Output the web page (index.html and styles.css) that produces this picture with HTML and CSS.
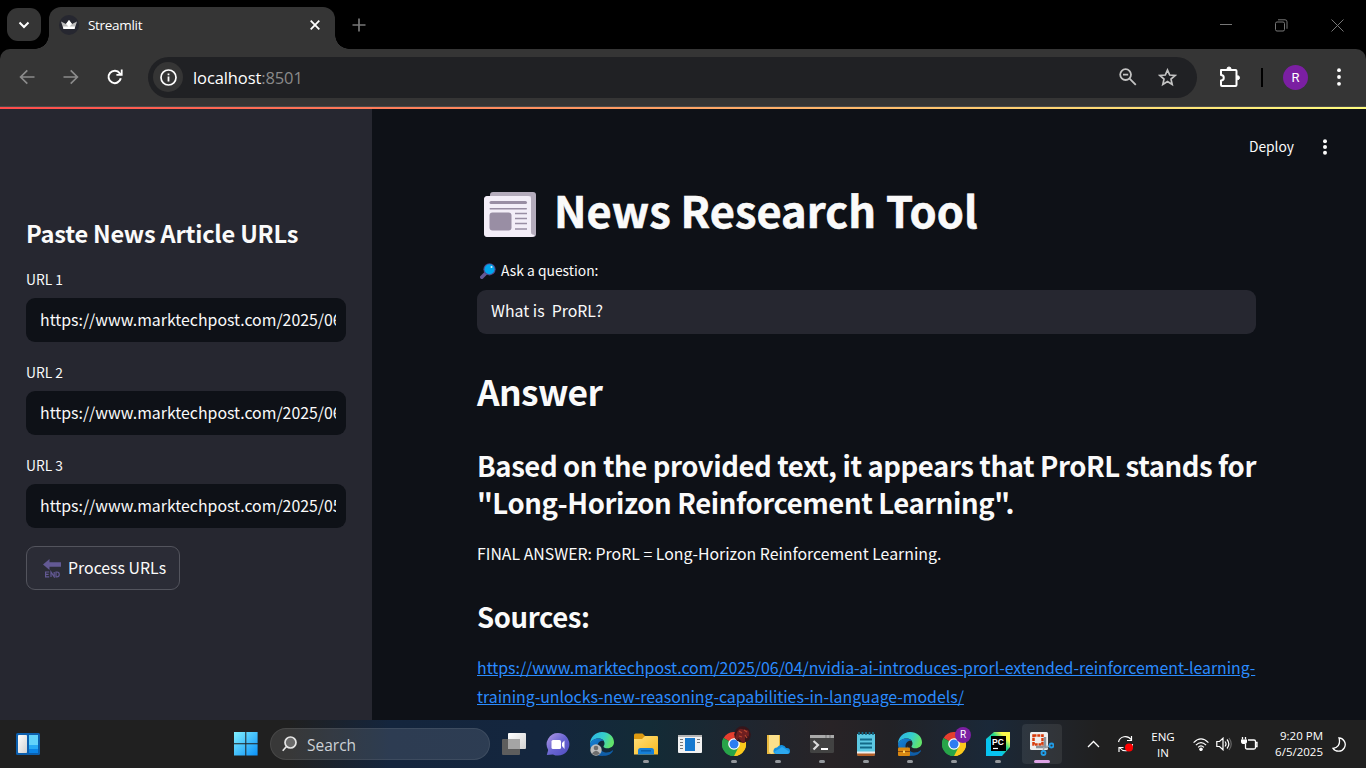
FILE: index.html
```html
<!DOCTYPE html>
<html lang="en">
<head>
<meta charset="utf-8">
<title>Streamlit</title>
<link rel="stylesheet" href="styles.css">
</head>
<body>
<svg class="defs" width="0" height="0" aria-hidden="true">
  <defs>
    <linearGradient id="win" x1="0" y1="0" x2="1" y2="1"><stop offset="0" stop-color="#80f0ff"/><stop offset="1" stop-color="#0a90f8"/></linearGradient>
    <linearGradient id="edgeTop" x1="0" y1="0" x2="1" y2=".3"><stop offset="0" stop-color="#2bb0ea"/><stop offset=".6" stop-color="#36cfcb"/><stop offset="1" stop-color="#62e36b"/></linearGradient>
    <linearGradient id="edgeBot" x1="0" y1="0" x2="1" y2="1"><stop offset="0" stop-color="#1683d6"/><stop offset="1" stop-color="#0b4a93"/></linearGradient>
    <linearGradient id="chat" x1="0" y1="0" x2="1" y2="1"><stop offset="0" stop-color="#b49be6"/><stop offset=".5" stop-color="#6a66d2"/><stop offset="1" stop-color="#4f4bc0"/></linearGradient>
    <linearGradient id="fold" x1="0" y1="0" x2="1" y2="1"><stop offset="0" stop-color="#ffe07a"/><stop offset="1" stop-color="#f9b91e"/></linearGradient>
    <linearGradient id="pc" x1="0" y1="1" x2="1" y2="0"><stop offset=".35" stop-color="#07c3f2"/><stop offset=".6" stop-color="#21d789"/><stop offset=".8" stop-color="#fcf84a"/></linearGradient>
    <linearGradient id="light" x1="0" y1="0" x2="1" y2="1"><stop offset="0" stop-color="#fff"/><stop offset="1" stop-color="#d2d2d2"/></linearGradient>
    <symbol id="edge" viewBox="0 0 24 24">
      <path d="M0 12C0 5 5.500 0 12 0c7 0 12 4.800 12 10.200 0 3.800-3 6-6.500 6-2.500 0-4-.9-4-1.800 0-.6 1-1.200 1-3C14.500 8.500 12 6.500 8.500 6.500 4 6.500 1 9 0 12z" fill="url(#edgeTop)"/>
      <path d="M0 12c1-3.500 4.500-5.500 8.500-5.500 2.500 0 4.500 1 5.300 2.500-4-.8-6.300 2-6.300 5.500 0 4.500 4 8 8.500 8 2 0 4-.7 5.500-1.800C19.500 23 16 24 12 24 5 24 0 18.500 0 12z" fill="url(#edgeBot)"/>
      <path d="M9.500 14c0 4 3.500 6.500 7 6.500 2.500 0 4.500-1 5.700-2 .6-.5 1 .2.500.9C21 22 18 23.500 15 23.500 10 23 7 18 9.500 14z" fill="#0f5ea8"/>
    </symbol>
    <symbol id="chrome" viewBox="0 0 24 24">
      <path d="M12 12 1.600 6A12 12 0 0 1 22.400 6z" fill="#e43e2e"/>
      <path d="M12 12 22.400 6A12 12 0 0 1 12 24z" fill="#fbc91c"/>
      <path d="M12 12V24A12 12 0 0 1 1.600 6z" fill="#27a449"/>
      <path d="M12 6.500H22.700A12 12 0 0 1 12 24l4.800-9.200z" fill="#fbc91c"/>
      <path d="M12 24 16.800 14.800 7.200 14.800 1.600 6A12 12 0 0 0 12 24z" fill="#27a449"/>
      <circle cx="12" cy="12" r="5.800" fill="#fff"/><circle cx="12" cy="12" r="4.500" fill="#2d7df0"/>
    </symbol>
  </defs>
</svg>

<header class="tabstrip">
  <button class="tab-search"><svg width="12" height="12" viewBox="0 0 12 12"><path d="M1.500 3.500 6 8l4.500-4.500" fill="none" stroke="#fff" stroke-width="2"/></svg></button>
  <div class="tab">
    <span class="favicon"><svg width="16" height="10" viewBox="0 0 16 10"><path d="M0 1.500 5 4 8 0l3 4 5-2.500L13.500 9h-11z" fill="#bdbdbd"/><path d="M5 4 8 0l3 4-3 3zM2 6.500h12L13.500 9h-11z" fill="#fff"/></svg></span>
    <span class="tab-title">Streamlit</span>
    <svg class="tab-close" width="10" height="10" viewBox="0 0 10 10"><path d="M.7.7l8.600 8.600M9.300.7.700 9.300" stroke="#fff" stroke-width="1.800"/></svg>
  </div>
  <svg class="new-tab" width="14" height="14" viewBox="0 0 14 14"><path d="M7 .5v13M.5 7h13" stroke="#777" stroke-width="1.700"/></svg>
  <div class="window-controls">
    <svg width="12" height="12" viewBox="0 0 12 12"><path d="M0 5.500h12" stroke="#777"/></svg>
    <svg width="13" height="13" viewBox="0 0 13 13" fill="none" stroke="#777"><rect x=".5" y="3" width="9" height="9" rx="1.500"/><path d="M3 .8h7a2 2 0 0 1 2 2v7"/></svg>
    <svg width="13" height="13" viewBox="0 0 13 13"><path d="m.5.5 12 12m0-12-12 12" stroke="#777"/></svg>
  </div>
</header>

<nav class="toolbar">
  <svg class="nav-icon" width="16" height="16" viewBox="0 0 16 16" fill="none" stroke="#8b8b8b" stroke-width="1.700"><path d="M15.500 8H2M8.300 1.300 1.600 8l6.700 6.700"/></svg>
  <svg class="nav-icon" width="16" height="16" viewBox="0 0 16 16" fill="none" stroke="#8b8b8b" stroke-width="1.700"><path d="M.5 8H14M7.700 1.300 14.400 8l-6.700 6.700"/></svg>
  <svg class="nav-icon" width="16" height="16" viewBox="0 0 16 16"><path d="M13.800 9.300A6.200 6.200 0 1 1 12.800 4.300L14 5.700" fill="none" stroke="#fff" stroke-width="2"/><path d="M15.600.5v6.200H9.400V5h4.400V.5z" fill="#fff"/></svg>
  <div class="omnibox">
    <span class="site-info"><svg width="17" height="17" viewBox="0 0 17 17"><circle cx="8.500" cy="8.500" r="7.500" fill="none" stroke="#fff" stroke-width="1.700"/><path d="M8.500 7.500v5M8.500 4.500v1.800" stroke="#fff" stroke-width="1.800"/></svg></span>
    <span class="url">localhost<span class="port">:8501</span></span>
    <svg class="zoom-icon" width="18" height="18" viewBox="0 0 18 18" fill="none" stroke="#c3c3c3" stroke-width="1.800"><circle cx="6.600" cy="6.600" r="5.400"/><path d="M4 6.600h5.200M10.600 10.600l6.200 6.200"/></svg>
    <svg class="star" width="19" height="19" viewBox="0 0 19 19" fill="none" stroke="#c3c3c3" stroke-width="1.700"><path d="m9.500 2 2.200 5 5.400.5-4.100 3.600 1.200 5.400-4.700-2.900-4.700 2.900L6 11.100 1.900 7.500 7.300 7z"/></svg>
  </div>
  <svg class="puzzle" width="22" height="22" viewBox="0 0 22 22" fill="none" stroke="#fff" stroke-width="2" stroke-linejoin="round"><path d="M2 4h14.500a1 1 0 0 1 1 1v14a1 1 0 0 1-1 1H3a1 1 0 0 1-1-1v-4.500c3.700 0 3.700-5.500 0-5.500z"/><path d="M8 3a2 2 0 0 1 4 0zM18.500 9.700a2 2 0 0 1 0 4z" fill="#fff" stroke-width="1"/></svg>
  <span class="separator"></span>
  <span class="profile">R</span>
  <svg width="6" height="18" viewBox="0 0 6 18" fill="#fff"><circle cx="3" cy="2.200" r="1.900"/><circle cx="3" cy="9" r="1.900"/><circle cx="3" cy="15.800" r="1.900"/></svg>
</nav>
<div class="decoration"></div>

<div class="app">
  <aside class="sidebar">
    <h2 class="side-title">Paste News Article URLs</h2>
    <label class="field-label">URL 1</label>
    <div class="side-input"><span>https://www.marktechpost.com/2025/06/04</span></div>
    <label class="field-label">URL 2</label>
    <div class="side-input"><span>https://www.marktechpost.com/2025/06/04</span></div>
    <label class="field-label">URL 3</label>
    <div class="side-input"><span>https://www.marktechpost.com/2025/05/30</span></div>
    <button class="process"><svg width="18" height="19" viewBox="0 0 18 19"><path d="M0 5.500 6.500 0v3.200H18v4.600H6.500V11z" fill="#635994"/><path d="M6.200 13H2.600v4.800h3.600M2.600 15.400h3M8 18v-5l3.200 4.800V13M13 13v4.800h1c3 0 3-4.800 0-4.800z" fill="none" stroke="#635994" stroke-width="1.200"/></svg><span>Process URLs</span></button>
  </aside>

  <main class="main">
    <div class="app-bar"><span>Deploy</span><svg width="6" height="16" viewBox="0 0 6 16" fill="#fafafa"><circle cx="3" cy="2.200" r="2"/><circle cx="3" cy="8" r="2"/><circle cx="3" cy="13.800" r="2"/></svg></div>
    <h1 class="title">
      <svg width="52" height="46" viewBox="0 0 52 46"><path d="M6 3q0-3 3-3h40q3 0 3 3v39q0 3-3 3H9z" fill="#b4acbc"/><rect x="0" y="4" width="50" height="41" rx="3.500" fill="#cdc4d6"/><path d="M0 8q0-4 4-4h40q3 0 3 3v33q0 3 4 3-1 2-4 2H4q-4 0-4-4z" fill="#f3eef8"/><path d="M47 3h4.500v37q0 2.500-2.200 2.500T47 40z" fill="#b4acbc"/><rect x="5.500" y="9" width="37.500" height="3" rx="1.500" fill="#998ea4"/><rect x="5.500" y="16" width="37.500" height="1.500" rx=".7" fill="#998ea4"/><rect x="5.500" y="20.500" width="22" height="18" rx="3" fill="#998ea4"/><path d="M31 21.500h12M31 26.500h12M31 31.500h12M31 37h12" stroke="#998ea4" stroke-width="1.300"/></svg>
      <span>News Research Tool</span>
    </h1>
    <label class="question-label"><svg width="16" height="16" viewBox="0 0 16 16"><path d="M6 10 1.800 14.200" stroke="#635994" stroke-width="3.600" stroke-linecap="round"/><circle cx="9.500" cy="6.300" r="6.100" fill="#4b4b8f"/><circle cx="9.500" cy="6.300" r="5" fill="#00a6ed"/><circle cx="11.500" cy="4" r="1" fill="#d8f2ff"/></svg><span>Ask a question:</span></label>
    <div class="question-input">What is&nbsp; ProRL?</div>
    <h1 class="answer">Answer</h1>
    <h3 class="statement">Based on the provided text, it appears that ProRL stands for<br>"Long-Horizon Reinforcement Learning".</h3>
    <p class="body">FINAL ANSWER: ProRL = Long-Horizon Reinforcement Learning.</p>
    <h3 class="statement sources">Sources:</h3>
    <p class="body"><a>https://www.marktechpost.com/2025/06/04/nvidia-ai-introduces-prorl-extended-reinforcement-learning-<br>training-unlocks-new-reasoning-capabilities-in-language-models/</a></p>
  </main>
</div>

<footer class="taskbar">
  <svg class="widgets" width="24" height="22" viewBox="0 0 24 22"><rect width="24" height="22" rx="1.500" fill="#0c5fae"/><rect x="2" y="2" width="9" height="18" rx=".8" fill="url(#light)"/><path d="M13 2h9v10h-9z" fill="#62d2fb"/><path d="M13 12h9v4h-9z" fill="#27a9f5"/><path d="M13 16h9v4h-9z" fill="#0a84e8"/></svg>
  <svg class="start" width="24" height="24" viewBox="0 0 24 24"><path d="M0 0h11.300v11.300H0zM12.300 0h11.300v11.300H12.300zM0 12.300h11.300v11.300H0zM12.300 12.300h11.300v11.300H12.300z" fill="url(#win)"/></svg>
  <div class="search"><svg width="15" height="16" viewBox="0 0 15 16" fill="#6b6b6b" stroke="#e6e6e6" stroke-width="1.700"><circle cx="8.500" cy="6.500" r="5.500"/><path d="M4.500 10.500.7 14.800"/></svg><span>Search</span></div>
  <div class="apps">
    <div class="app-icon"><svg width="24" height="24" viewBox="0 0 24 24"><rect x="6" y="1" width="18" height="16" rx="1" fill="url(#light)"/><rect x="0" y="7" width="18" height="16" rx="1" fill="#5d5d5d"/><path d="M6 7h12v10H6z" fill="#a5a5a5"/></svg></div>
    <div class="app-icon"><svg width="24" height="24" viewBox="0 0 24 24"><path d="M12 1a11.300 11.300 0 1 1-5 21.400L.8 23l1.400-5A11.300 11.300 0 0 1 12 1z" fill="url(#chat)"/><rect x="5.500" y="8" width="9.500" height="9" rx="1.500" fill="#fff"/><path d="m16 11 2.500-2.500V17L16 14z" fill="#fff"/></svg></div>
    <div class="app-icon"><svg width="24" height="24"><use href="#edge"/><circle cx="6" cy="18" r="5.700" fill="#bdbdbd"/><circle cx="6" cy="16" r="2.300" fill="#6d6d6d"/><path d="M2 21.500q4-5.500 8 0-4 3-8 0z" fill="#6d6d6d"/></svg></div>
    <div class="app-icon running"><svg width="24" height="24" viewBox="0 0 24 24"><path d="M0 3q0-1.500 1.500-1.500h7L11 4v4H0z" fill="#dd9a10"/><path d="M0 7h8l3-3h12q1 0 1 1v17.500H0z" fill="url(#fold)"/><path d="M4 22.500v-4q0-2.500 2.500-2.500h11q2.500 0 2.500 2.500v4z" fill="#1580d8"/><path d="M7 18.800h10" stroke="#0b5da8" stroke-width="1.500"/></svg></div>
    <div class="app-icon"><svg width="24" height="24" viewBox="0 0 24 24"><rect y="3" width="24" height="18" rx="1" fill="#f2f2f2"/><path d="M0 3h24v2H0z" fill="#b5b5b5"/><path d="M7 6h10v13H7z" fill="#1679cf"/><path d="M2 7.500h3M2 10.500h3M2 13.500h3M2 16.500h3M19 7.500h3M19 10.500h3" stroke="#777" stroke-width="1"/></svg></div>
    <div class="app-icon running"><svg width="24" height="24"><use href="#chrome"/></svg><svg class="badge photo" width="17" height="17" viewBox="0 0 17 17"><circle cx="8.500" cy="8.500" r="8.300" fill="#35151a"/><path d="M3 6q2-4 5-3t5 1 2 4-2 2-2 4-4 1-3-2-3-1z" fill="#6e1f20"/><path d="m5 5 3 2m2-3 3 2M5 10l3 1m3-2 2 3" stroke="#b8452f" stroke-width="1.200"/></svg></div>
    <div class="app-icon running"><svg width="24" height="24" viewBox="0 0 24 24"><path d="M1 3h13v19H1z" fill="#e9b93e"/><path d="M3 3h10v17l-8 2-2-2z" fill="#fbe08b"/><path d="M10 22q-3-.5-2.500-3.500T11 15.500q2-3 5-2.500t4 3q4-.5 4 3t-3 3z" fill="#1490df"/><path d="m8 20 8-5q4 2 7.500 5-1 2-3 2H10z" fill="#2da9f0"/></svg></div>
    <div class="app-icon running"><svg width="24" height="24" viewBox="0 0 24 24"><rect y="3" width="24" height="18" rx="1.500" fill="#424242"/><path d="M0 3h24v3H0z" fill="#aaa"/><path d="M16 3v3M20 3v3" stroke="#777"/><path d="m3.500 9 4.500 4-4.500 4.500" fill="none" stroke="#ddd" stroke-width="2.200"/><path d="M11 17h7" stroke="#fff" stroke-width="2"/></svg></div>
    <div class="app-icon running"><svg width="24" height="24" viewBox="0 0 24 24"><path d="M3 2h18v20q0 2-2 2H5q-2 0-2-2z" fill="#5cc8e2"/><path d="M3 21h18v1.500q0 1.500-2 1.500H5q-2 0-2-1.500z" fill="#b15d26"/><path d="M3 19.500h18v2H3z" fill="#eee"/><path d="M6 7.500h12M6 11.500h12M6 15.500h12" stroke="#126987" stroke-width="1.800"/><path d="M5 0v3M8.500 0v3M12 0v3M15.500 0v3M19 0v3" stroke="#126987" stroke-width="1.700"/></svg></div>
    <div class="app-icon running"><svg width="24" height="24"><use href="#edge"/><rect y="15.500" width="12" height="8.500" rx="1" fill="#d98811"/><path d="M0 19.500h12" stroke="#8d4c0b"/><path d="M5 18.500h2v2.500H5z" fill="#ffd35b"/></svg></div>
    <div class="app-icon running"><svg width="24" height="24"><use href="#chrome"/></svg><span class="badge letter">R</span></div>
    <div class="app-icon running"><svg width="24" height="24" viewBox="0 0 24 24"><path d="M0 7 8 0h16v15l-8 9H0z" fill="url(#pc)"/><path d="M5 4h15v15H5z" fill="#000"/><text x="6" y="12.500" class="pc-text">PC</text><path d="M7 16.500h5" stroke="#fff" stroke-width="1.200"/></svg></div>
    <div class="app-icon running active"><svg width="24" height="24" viewBox="0 0 24 24"><rect width="18" height="18" rx="1.500" fill="#efefef"/><rect x="3.500" y="3.500" width="9" height="9" fill="none" stroke="#d83b0b" stroke-width="2.500" stroke-dasharray="3 .8"/><path d="M15 5v11M6 15h12" stroke="#8b949c" stroke-width="2.500"/><path d="m14 15-1 5m3-5 4-1" stroke="#aaa" stroke-width="1.500"/><circle cx="13.500" cy="21" r="2" fill="none" stroke="#209de8" stroke-width="1.800"/><circle cx="21.500" cy="13.500" r="2" fill="none" stroke="#209de8" stroke-width="1.800"/></svg></div>
  </div>
  <div class="tray">
    <svg class="chev" width="13" height="8" viewBox="0 0 13 8"><path d="m1 7 5.500-5.500L12 7" fill="none" stroke="#fff" stroke-width="1.300"/></svg>
    <svg class="update" width="18" height="18" viewBox="0 0 18 18" fill="none" stroke="#fff" stroke-width="1.200"><path d="M1.500 7A7 7 0 0 1 14 4.500M14.500 1v4.500H10M15.500 9A7 7 0 0 1 3 13M2 17v-4.500h4.500"/><circle cx="12" cy="12.500" r="4" fill="#f00" stroke="none"/></svg>
    <div class="lang">ENG<br>IN</div>
    <svg class="wifi" width="16" height="13" viewBox="0 0 16 13" fill="none" stroke="#fff" stroke-width="1.200"><path d="M.6 4.600q7.400-7.400 14.800 0M2.900 7.100q5.100-5.100 10.200 0M5.100 9.400q2.900-2.900 5.800 0"/><circle cx="8" cy="11.200" r="1.200" fill="#fff"/></svg>
    <svg class="sound" width="16" height="14" viewBox="0 0 16 14" fill="none" stroke="#fff" stroke-width="1.200"><path d="M.8 4.500h2.700L7 1.200v11.600L3.500 9.500H.8zM9 4.500q2 2.500 0 5M11 2.500q3.700 4.500 0 9"/><path d="M13 1q4.500 6 0 12" stroke="#666"/></svg>
    <svg class="battery" width="17" height="14" viewBox="0 0 17 14" fill="none" stroke="#fff" stroke-width="1.300"><path d="M7 3h6q1.500 0 1.500 1.500v6q0 1.500-1.500 1.500H6q-1.500 0-1.500-1.500V7M15 5.500h1v4h-1"/><path d="M1.500 0v2.500M4.500 0v2.500"/><path d="M0 2.500h6v2.200Q6 7 3 7T0 4.700z" fill="#fff" stroke="none"/></svg>
    <div class="clock">9:20 PM<br>6/5/2025</div>
    <svg class="moon" width="14" height="15" viewBox="0 0 14 15"><path d="M7 .8a6.700 6.700 0 1 1-6 10.500C5 11 9 8 7 .8z" fill="none" stroke="#fff" stroke-width="1.300"/></svg>
  </div>
</footer>
</body>
</html>
```
FILE: styles.css
```css
* { box-sizing: border-box; }
body {
  margin: 0; width: 1366px; height: 768px; overflow: hidden;
  display: flex; flex-direction: column; background: #000; color: #fafafa;
  font-family: "Noto Sans CJK SC", "Noto Sans", sans-serif;
}
svg { display: block; flex: none; }
.defs { position: absolute; }
button { border: 0; padding: 0; color: inherit; font: inherit; }
h1, h2, h3, p { margin: 0; white-space: nowrap; }

/* tab strip */
.tabstrip { height: 49px; flex: none; display: flex; align-items: flex-start; padding-left: 7px; background: #000; font-family: "Open Sans", "Noto Sans", sans-serif; }
.tab-search { width: 34px; height: 33px; margin-top: 8px; border-radius: 11px; background: #353535; display: flex; align-items: center; justify-content: center; }
.tab { position: relative; width: 286px; height: 42px; margin: 7px 0 0 8px; padding: 0 15px 7px 10px; border-radius: 12px 12px 0 0; background: #353535; display: flex; align-items: center; }
.tab::before, .tab::after { content: ""; position: absolute; bottom: 0; width: 14px; height: 14px; }
.tab::before { left: -14px; background: radial-gradient(circle at 0 0, transparent 13.500px, #353535 14px); }
.tab::after { right: -14px; background: radial-gradient(circle at 100% 0, transparent 13.500px, #353535 14px); }
.favicon { width: 20px; height: 20px; border-radius: 50%; background: #262730; display: flex; align-items: center; justify-content: center; }
.tab-title { margin-left: 9px; font-size: 13.500px; letter-spacing: -.3px; flex: 1; color: #fff; }
.new-tab { margin: 18px 0 0 17px; }
.window-controls { margin: 19px 22px 0 auto; display: flex; gap: 43px; }

/* toolbar */
.toolbar { height: 57px; flex: none; display: flex; align-items: center; padding: 0 24px 1px 19px; background: #353535; border-radius: 10px 10px 0 0; font-family: "Open Sans", "Noto Sans", sans-serif; }
.nav-icon { margin-right: 28px; }
.omnibox { width: 1049px; height: 41px; margin: 1px 0 0 -3px; padding: 0 20px 1px 5px; border-radius: 21px; background: #202124; display: flex; align-items: center; }
.site-info { width: 30px; height: 30px; border-radius: 50%; background: #353535; display: flex; align-items: center; justify-content: center; }
.url { flex: 1; margin-left: 10px; font-size: 16.500px; letter-spacing: -.1px; color: #fff; }
.port { color: #8a8a8a; }
.zoom-icon { margin-right: 21px; }
.puzzle { margin-left: 22px; }
.separator { width: 2px; height: 19px; margin-left: 20px; background: #000; }
.profile { width: 25px; height: 25px; margin: 0 28px 0 20px; border-radius: 50%; background: #7b1fa2; font: 13px/25px Roboto, sans-serif; text-align: center; color: #fff; }
.decoration { height: 3px; flex: none; border-top: 1px solid #4a4a4a; background: linear-gradient(90deg, #ff4b4b, #fffd80); }

/* streamlit app */
.app { height: 611px; flex: none; display: flex; background: #0e1117; }
.sidebar { width: 372px; padding: 105px 26px 0; background: #262730; }
.side-title { height: 40px; line-height: 38px; font-size: 23.600px; font-weight: 600; letter-spacing: -.23px; margin-bottom: 16px; }
.field-label { display: block; height: 20px; line-height: 18px; margin-bottom: 8px; font-size: 13.800px; }
.side-input { height: 44px; line-height: 44px; padding: 0 10px 0 14px; margin-bottom: 21px; border-radius: 9px; background: #0e1117; font-size: 15.860px; }
.side-input span { display: block; overflow: hidden; white-space: nowrap; }
.process { height: 44px; width: 154px; margin-top: -3px; padding-left: 16px; border: 1px solid #53545d; border-radius: 9px; background: #2b2c36; display: flex; align-items: center; font-size: 15.860px; white-space: nowrap; }
.process span { margin-left: 7px; padding-bottom: 2px; }

.main { flex: 1; padding: 0 38px 0 105px; overflow: hidden; }
.app-bar { height: 76px; display: flex; align-items: center; justify-content: flex-end; gap: 28px; font-size: 13.800px; }
.app-bar span, .question-label span { padding-bottom: 2px; }
.title { height: 54px; line-height: 54px; padding-left: 7px; display: flex; align-items: center; gap: 18px; font-size: 43.400px; font-weight: 700; letter-spacing: .05px; -webkit-text-stroke: .6px #fafafa; }
.title svg { margin-top: 5px; }
.title span { padding-bottom: 6px; }
.question-label { height: 22px; line-height: 22px; margin-top: 21px; padding-left: 3px; display: flex; align-items: center; gap: 5px; font-size: 13.850px; }
.question-input { width: 779px; height: 44px; line-height: 42px; margin-top: 8px; padding-left: 14px; border-radius: 9px; background: #262730; font-size: 15.860px; }
.answer { height: 48px; line-height: 44px; margin-top: 35px; font-size: 35.400px; font-weight: 600; letter-spacing: -.65px; }
.statement { line-height: 37px; margin-top: 30px; font-size: 27.500px; font-weight: 600; letter-spacing: -.41px; }
.body { line-height: 29px; margin-top: 18px; font-size: 15.860px; }
.body a { color: #2b8cff; text-decoration: underline; }

/* taskbar */
.taskbar { height: 48px; flex: none; display: flex; align-items: center; font-family: "Open Sans", "Noto Sans", sans-serif;
  background: linear-gradient(90deg, #202020 0, #202020 290px, #14253d 390px, #14263e 540px, #132b36 650px, #1e2630 740px, #282326 830px, #222226 890px, #1a2838 990px, #20242a 1050px, #202020 1100px); }
.widgets { margin-left: 16px; }
.start { margin-left: 194px; }
.search { width: 220px; height: 32px; margin-left: 12px; padding: 1px 0 0 11px; border-radius: 16px; border: 1px solid #ffffff14; background: #ffffff1c; display: flex; align-items: center; gap: 10px; font-size: 15.500px; color: #ccd1d6; }
.search svg { margin-bottom: 2px; }
.apps { display: flex; margin-left: 2px; }
.app-icon { position: relative; width: 44px; height: 48px; display: flex; align-items: center; justify-content: center; }
.running::after { content: ""; position: absolute; bottom: 5px; left: 19px; width: 6px; height: 3px; border-radius: 2px; background: #94989d; }
.active { width: 40px; height: 40px; margin: 4px 2px 0; border-radius: 4px; background: #ffffff14; }
.active::after { bottom: 1px; left: 12px; width: 16px; background: #dda3e6; }
.badge { position: absolute; }
.photo { left: 22px; top: 6px; }
.letter { left: 23px; top: 7px; width: 16px; height: 16px; border-radius: 50%; background: #7b1fa2; font: 10px/16px Roboto, sans-serif; text-align: center; color: #fff; }
.pc-text { font: bold 8.500px "Liberation Sans", sans-serif; fill: #fff; }
.tray { flex: 1; display: flex; align-items: center; padding-left: 23px; font-size: 11.500px; line-height: 16px; color: #fff; }
.update { margin-left: 17px; }
.lang { width: 38px; margin-left: 9px; padding-top: 1px; text-align: center; }
.wifi { margin-left: 11px; }
.sound { margin-left: 7px; }
.battery { margin-left: 9px; }
.clock { width: 64px; margin-left: 1px; text-align: right; }
.moon { margin-left: 9px; }
```
